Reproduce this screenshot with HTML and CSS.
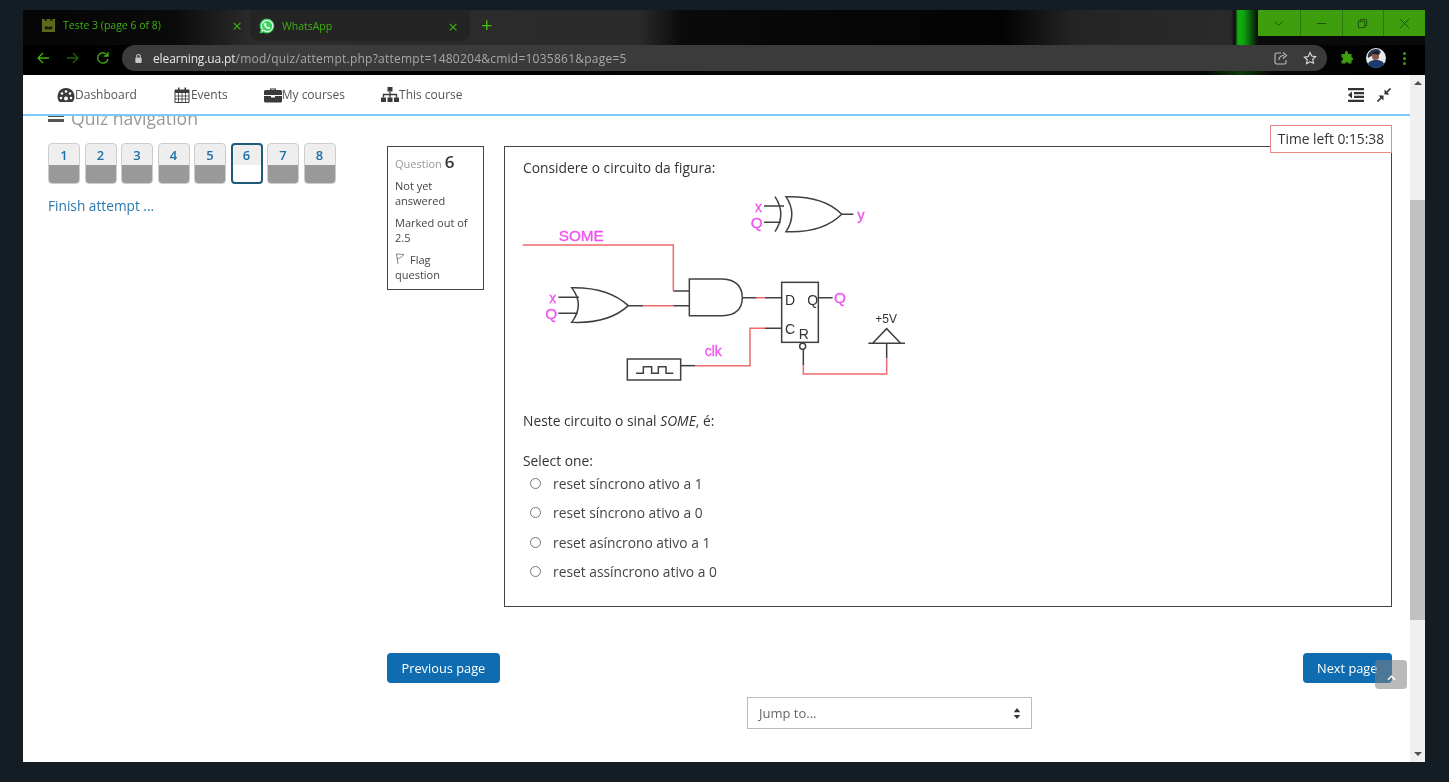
FILE: index.html
```html
<!DOCTYPE html>
<html lang="en">
<head>
    <meta charset="UTF-8">
    <meta name="viewport" content="width=device-width, initial-scale=1.0">
    <link rel="stylesheet" href="styles.css">
    <title>Teste 3 (page 6 of 8)</title>
</head>
<body>
    <div class="window">
        <!-- browser tabs -->
        <div class="tabstrip">
            <div class="tab">
                <svg class="tab-icon" viewBox="0 0 16 16"><path d="M1 1h3v2h2V1h4v2h2V1h3v14H1z" fill="#5b6b1e"/><path d="M4 9h3l1 1 1-1h3v3H4z" fill="#141a08"/></svg>
                <span class="tab-title">Teste 3 (page 6 of 8)</span>
                <span class="tab-close">×</span>
            </div>
            <div class="tab tab-second">
                <svg class="tab-icon wa" viewBox="0 0 16 16"><path d="M8 .5a7.4 7.4 0 0 0-6.3 11.200L.6 15.500l3.900-1A7.400 7.400 0 1 0 8 .5z" fill="#3bd35f"/><path d="M8 2a6 6 0 0 0-5 9.200l-.6 2.300 2.400-.6A6 6 0 1 0 8 2z" fill="#fff"/><path d="M8 3a5 5 0 0 0-4.200 7.700l-.4 1.800 1.900-.5A5 5 0 1 0 8 3z" fill="#3bd35f"/><path d="M6 5c-.6.3-1 1-.8 1.900.4 1.700 2.200 3.600 4.100 3.900.9.100 1.600-.4 1.800-1.100l-1.500-.9-.7.6c-.9-.3-1.700-1.200-2-2l.6-.7L6.700 5z" fill="#fff"/></svg>
                <span class="tab-title">WhatsApp</span>
                <span class="tab-close">×</span>
            </div>
            <span class="new-tab">+</span>
            <div class="win-controls">
                <span class="win-btn"><svg viewBox="0 0 12 12"><path d="M1.500 4 6 8l4.500-4" /></svg></span>
                <span class="win-btn"><svg viewBox="0 0 12 12"><path d="M1 6h10" /></svg></span>
                <span class="win-btn"><svg viewBox="0 0 12 12"><path d="M1.500 3.500h7v7h-7zM3.500 3.500v-2h7v7h-2" /></svg></span>
                <span class="win-btn"><svg viewBox="0 0 12 12"><path d="M1 1l10 10M11 1L1 11" /></svg></span>
            </div>
        </div>

        <!-- address bar -->
        <div class="toolbar">
            <svg class="tool-icon" viewBox="0 0 14 14"><path d="M13 7H2M7 2L2 7l5 5" /></svg>
            <svg class="tool-icon dim" viewBox="0 0 14 14"><path d="M1 7h11M7 2l5 5-5 5" /></svg>
            <svg class="tool-icon" viewBox="0 0 14 14"><path d="M11.500 4.500A5.200 5.200 0 1 0 12 8M12 1v4H8" /></svg>
            <div class="omnibox">
                <svg class="lock" viewBox="0 0 10 12"><path d="M3 5V3.500a2 2 0 0 1 4 0V5" fill="none" stroke="#c8c8c8" stroke-width="1.200"/><rect x="1.500" y="5" width="7" height="6" rx="1" fill="#c8c8c8"/></svg>
                <span class="url"><b>elearning.ua.pt</b>/mod/quiz/attempt.php?attempt=1480204&amp;cmid=1035861&amp;page=5</span>
                <svg class="omni-icon" viewBox="0 0 14 14"><path d="M7 2H2.500A1.500 1.500 0 0 0 1 3.500v8A1.500 1.500 0 0 0 2.500 13h8a1.500 1.500 0 0 0 1.500-1.500V9M5 9c0-3 2-4.500 5-4.500M9 1.500l3.500 3-3.500 3" /></svg>
                <svg class="omni-icon star" viewBox="0 0 14 14"><path d="M7 1.500l1.700 3.600 3.900.5-2.900 2.700.8 3.900L7 10.800l-3.500 1.900.8-3.900-2.900-2.700 3.900-.5z" /></svg>
            </div>
            <svg class="puzzle" viewBox="0 0 14 14"><path d="M5 1.500a1.500 1.500 0 0 1 3 0V3h3.500v3.200a1.600 1.600 0 0 1 0 3.200v3.100H8.500a1.500 1.500 0 0 0-3 0H1.500V9.500a1.600 1.600 0 0 0 0-3.200V3H5z" fill="#3f9e0e"/></svg>
            <svg class="avatar" viewBox="0 0 20 20"><circle cx="10" cy="10" r="10" fill="#e8e8e8"/><path d="M2 16a10 10 0 0 0 16 0c-1-3-4-4-8-4s-7 1-8 4z" fill="#1c3a6e"/><path d="M2 10c-1-5 3-9 8-9 3 0 5 2 5 4-3-1-5 0-6 1z" fill="#2a3550"/><circle cx="9.500" cy="8.500" r="3.500" fill="#8a5a48"/><path d="M6 6c1-3 6-3 8-1l-1 2c-2-1-4-1-7-1z" fill="#1b1b22"/></svg>
            <span class="kebab"><i></i><i></i><i></i></span>
        </div>

        <div class="page">
            <div class="page-main">
                <nav class="topnav">
                    <a class="nav-item">
                        <svg viewBox="0 0 18 16"><path d="M9 1a8.500 8.500 0 0 0-7.500 12.500l1 1.500h13l1-1.500A8.500 8.500 0 0 0 9 1z" fill="#3a3a3a"/><circle cx="5" cy="6.500" r="1.300" fill="#fff"/><circle cx="9" cy="4.500" r="1.300" fill="#fff"/><circle cx="13" cy="6.500" r="1.300" fill="#fff"/><circle cx="4" cy="11" r="1.300" fill="#fff"/><circle cx="14" cy="11" r="1.300" fill="#fff"/><circle cx="9" cy="11.500" r="2" fill="#fff"/></svg>Dashboard</a>
                    <a class="nav-item">
                        <svg viewBox="0 0 16 16"><path d="M1 3h14v12.500H1z" fill="#fff" stroke="#3a3a3a"/><path d="M1 3h14v3H1z" fill="#3a3a3a"/><path d="M4 .5h1.500v4H4zM10.500.5H12v4h-1.500z" fill="#3a3a3a"/><path d="M1 9h14M1 12h14M4.500 6v9.500M8 6v9.500M11.500 6v9.500" stroke="#3a3a3a" stroke-width=".8"/></svg>Events</a>
                    <a class="nav-item">
                        <svg viewBox="0 0 18 16"><path d="M6 3V1.500h6V3h4.500A1.500 1.500 0 0 1 18 4.500V8H0V4.500A1.500 1.500 0 0 1 1.500 3zm1.300 0h3.400v-.6H7.300z" fill="#3a3a3a"/><path d="M0 9h7v1.500h4V9h7v5a1.500 1.500 0 0 1-1.500 1.500h-15A1.500 1.500 0 0 1 0 14z" fill="#3a3a3a"/></svg>My courses</a>
                    <a class="nav-item">
                        <svg viewBox="0 0 18 16"><path d="M6.500 0h5v4.500h-5zM0 10.500h5V15H0zM6.500 10.500h5V15h-5zM13 10.500h5V15h-5z" fill="#3a3a3a"/><path d="M9 4.500v6M2.500 10.500V7.500h13v3" fill="none" stroke="#3a3a3a" stroke-width="1.300"/></svg>This course</a>
                    <div class="nav-tools">
                        <svg viewBox="0 0 16 14"><path d="M0 0h16v2.200H0zM6 4h10v2.200H6zM6 7.800h10V10H6zM0 11.800h16V14H0zM4 3.500v7L0 7z" fill="#333"/></svg>
                        <svg viewBox="0 0 14 14"><path d="M13.500.5l-5 5M.5 13.500l5-5" fill="none" stroke="#333" stroke-width="1.700"/><path d="M7.500 1.500v5h5zM6.500 12.500v-5h-5z" fill="#333"/></svg>
                    </div>
                </nav>

                <div class="content">
                    <aside class="quiz-nav">
                        <h3 class="quiz-nav-title"><span class="burger"></span>Quiz navigation</h3>
                        <div class="qn-buttons">
                            <span class="qn">1</span>
                            <span class="qn">2</span>
                            <span class="qn">3</span>
                            <span class="qn">4</span>
                            <span class="qn">5</span>
                            <span class="qn qn-current">6</span>
                            <span class="qn">7</span>
                            <span class="qn">8</span>
                        </div>
                        <a class="finish">Finish attempt ...</a>
                    </aside>

                    <main class="attempt">
                        <div class="question">
                            <div class="q-info">
                                <h3 class="q-no">Question <b>6</b></h3>
                                <p>Not yet answered</p>
                                <p>Marked out of 2.5</p>
                                <p><svg class="flag" viewBox="0 0 10 12"><path d="M1.500 1l1.500 10M1.500 1C4 1 7 1.500 9 1.500 7.500 3 6 4.500 2.300 6" fill="none" stroke="#777" stroke-width=".9"/></svg>Flag question</p>
                            </div>
                            <div class="q-box">
                                <p class="q-text">Considere o circuito da figura:</p>
                                <svg class="circuit" viewBox="0 0 1230 615">
                                    <g class="wire">
                                        <path d="M762 63h60M762 112h50M995 88h35" />
                                        <path d="M795 35q35 53 0 105" />
                                        <path d="M828 35q35 53 0 105q110 5 167-52q-50-55-167-53z" />
                                        <path d="M145 337h62M145 385h58" />
                                        <path d="M185 308q40 52 0 104q110 5 170-50q-60-56-170-54z" />
                                        <path d="M355 362h45M490 362h48M490 318h48" />
                                        <path d="M538 282h100q58 3 59 56q-1 52-59 54h-100z" />
                                        <path d="M697 338h43M765 338h50" />
                                        <rect x="815" y="292" width="110" height="180" />
                                        <path d="M925 338h43M765 430h50" />
                                        <rect x="352" y="522" width="160" height="63" />
                                        <path d="M378 565h22v-20h25v20h20v-20h23v20h22" />
                                        <path d="M512 542h43" />
                                        <circle cx="878" cy="484" r="9" />
                                        <path d="M880 493v47M1130 520v-45" />
                                        <path d="M1075 475h110M1088 475l42-44 42 44" />
                                    </g>
                                    <g class="wire-red">
                                        <path d="M38 180h452v138" />
                                        <path d="M400 362h90M740 338h25" />
                                        <path d="M765 430h-45v112H555" />
                                        <path d="M880 540v27h250v-47" />
                                    </g>
                                    <g class="pin">
                                        <text x="735" y="80" font-size="42">x</text>
                                        <text x="722" y="128" font-size="46">Q</text>
                                        <text x="1042" y="105" font-size="44">y</text>
                                        <text x="146" y="168" font-size="46">SOME</text>
                                        <text x="118" y="354" font-size="42">x</text>
                                        <text x="106" y="402" font-size="46">Q</text>
                                        <text x="972" y="354" font-size="46">Q</text>
                                        <text x="584" y="514" font-size="42">clk</text>
                                    </g>
                                    <g class="port">
                                        <text x="825" y="360" font-size="42">D</text>
                                        <text x="892" y="360" font-size="42">Q</text>
                                        <text x="825" y="446" font-size="42">C</text>
                                        <text x="866" y="462" font-size="42">R</text>
                                        <text x="1096" y="414" font-size="36">+5V</text>
                                    </g>
                                </svg>
                                <p class="q-text q-after">Neste circuito o sinal <em>SOME</em>, é:</p>
                                <p class="q-text q-prompt">Select one:</p>
                                <ul class="answers">
                                    <li><span class="radio"></span>reset síncrono ativo a 1</li>
                                    <li><span class="radio"></span>reset síncrono ativo a 0</li>
                                    <li><span class="radio"></span>reset asíncrono ativo a 1</li>
                                    <li><span class="radio"></span>reset assíncrono ativo a 0</li>
                                </ul>
                            </div>
                        </div>
                        <div class="page-buttons">
                            <a class="btn">Previous page</a>
                            <a class="btn">Next page</a>
                        </div>
                        <div class="jump">
                            <div class="jump-select">Jump to...<svg viewBox="0 0 8 12"><path d="M4 0l3.500 4.500h-7zM4 12L.5 7.500h7z" fill="#333"/></svg></div>
                        </div>
                    </main>
                </div>

                <div class="timer">Time left 0:15:38</div>
                <a class="to-top"><svg viewBox="0 0 10 6"><path d="M1 5l4-4 4 4" /></svg></a>
            </div>
            <div class="scrollbar">
                <span class="arrow-up"></span>
                <span class="thumb"></span>
                <span class="arrow-down"></span>
            </div>
        </div>
    </div>
</body>
</html>
```

FILE: styles.css
```css
html, body {
    height: 100%;
}

body {
    margin: 0;
    background: #141c24;
    font-family: "Open Sans", sans-serif;
    overflow: hidden;
}

/* the reference photo is a bit soft */
.window {
    width: 1402px;
    margin: 10px 0 0 23px;
    display: flex;
    flex-direction: column;
    filter: blur(.35px);
}

/* Tabs */
.tabstrip {
    height: 35px;
    display: flex;
    align-items: flex-start;
    background:
        linear-gradient(90deg, transparent 1208px, #0c0c0c 1212px, #12b012 1215px, #0fa00f 1221px, #0a0a0a 1235px),
        linear-gradient(90deg, #050505 0, #0a0a0a 150px, #2c2c2c 230px, #2b2b2b 615px, #0a0a0a 660px, #030303 980px, #242424 1050px, #2a2a2a 1200px);
    color: #3fb010;
    font-size: 10.500px;
}

.tab {
    width: 227px;
    height: 30px;
    box-sizing: border-box;
    padding: 0 8px 0 18px;
    display: flex;
    align-items: center;
    gap: 7px;
}

.tab-second {
    width: 220px;
    height: 31px;
    padding: 1px 12px 0 9px;
    background: #242424;
    border-radius: 0 0 8px 8px;
}

.tab-icon {
    width: 15px;
    height: 15px;
    flex: none;
}

.tab-second .tab-icon {
    width: 16px;
    height: 16px;
}

.tab-title {
    flex: 1;
    white-space: nowrap;
}

.tab-close {
    font-size: 17px;
    line-height: 1;
    color: #3fb010;
}

.new-tab {
    height: 30px;
    margin-left: 11px;
    font-size: 20px;
    line-height: 30px;
    color: #46c012;
}

.win-controls {
    margin-left: auto;
    display: flex;
    height: 26px;
    background: #3f9e0e;
}

.win-btn {
    width: 41.750px;
    box-sizing: border-box;
    display: flex;
    align-items: center;
    justify-content: center;
    border-left: 1px solid #2c7a08;
}

.win-btn:first-child {
    border-left: none;
}

.win-btn svg {
    width: 11px;
    height: 11px;
    fill: none;
    stroke: #1d4d08;
    stroke-width: 1;
}

/* Address bar */
.toolbar {
    height: 30px;
    box-sizing: border-box;
    display: flex;
    align-items: center;
    padding: 0 0 4px 13px;
    background: linear-gradient(90deg, #000 0, #050505 1180px, #0c3a0c 1218px, #050505 1250px, #000);
}

.tool-icon {
    width: 14px;
    height: 14px;
    margin-right: 16px;
    flex: none;
    fill: none;
    stroke: #3fb010;
    stroke-width: 1.300;
}

.tool-icon.dim {
    stroke: #24600c;
}

.omnibox {
    width: 1205px;
    height: 26px;
    margin-left: -4px;
    flex: none;
    box-sizing: border-box;
    padding: 0 10px 0 12px;
    display: flex;
    align-items: center;
    background: #3b3b3b;
    border-radius: 13px;
}

.lock {
    width: 9px;
    height: 11px;
    flex: none;
    margin-right: 10px;
}

.url {
    flex: 1;
    font-size: 12px;
    color: #a8a8a8;
    white-space: nowrap;
    letter-spacing: .24px;
}

.url b {
    font-weight: 400;
    color: #e8e8e8;
    letter-spacing: -.12px;
}

.omni-icon {
    width: 14px;
    height: 14px;
    margin-left: 15px;
    fill: none;
    stroke: #bdbdbd;
    stroke-width: 1.100;
}

.omni-icon.star {
    stroke: #e0e0e0;
}

.puzzle {
    width: 14px;
    height: 14px;
    margin-left: 13px;
    flex: none;
}

.avatar {
    width: 20px;
    height: 20px;
    margin-left: 12px;
    flex: none;
}

.kebab {
    display: flex;
    flex-direction: column;
    gap: 2px;
    margin-left: 17px;
}

.kebab i {
    width: 3px;
    height: 3px;
    border-radius: 50%;
    background: #3f9e0e;
}

/* Page */
.page {
    height: 687px;
    display: flex;
    background: #fff;
}

.page-main {
    position: relative;
    flex: 1;
    display: flex;
    flex-direction: column;
    min-width: 0;
}

.topnav {
    height: 41px;
    flex: none;
    box-sizing: border-box;
    display: flex;
    align-items: center;
    padding: 0 18px 0 34px;
    background: #fff;
    border-bottom: 2px solid #7cc9fb;
    position: relative;
    z-index: 2;
    gap: 36px;
}

.nav-item {
    display: flex;
    align-items: center;
    font-size: 12px;
    color: #555;
}

.nav-item svg {
    width: 18px;
    height: 16px;
}

.nav-tools {
    margin-left: auto;
    display: flex;
    align-items: center;
    gap: 12px;
}

.nav-tools svg {
    width: 16px;
    height: 14px;
}

.content {
    flex: 1;
    min-height: 0;
    display: flex;
    padding-left: 25px;
}

.quiz-nav {
    width: 339px;
    flex: none;
}

.quiz-nav-title {
    margin: -11px 0 0;
    height: 26px;
    line-height: 26px;
    font-size: 17.600px;
    font-weight: 400;
    color: #999;
    display: flex;
    align-items: center;
}

.burger {
    width: 16px;
    height: 2px;
    margin-right: 7px;
    border-top: 3px solid #555;
    border-bottom: 3px solid #555;
}

.qn-buttons {
    display: flex;
    gap: 4.500px;
    margin-top: 12px;
}

.qn {
    width: 32px;
    height: 41px;
    box-sizing: border-box;
    padding-top: 1px;
    border: 1px solid #ccc;
    border-radius: 4px;
    background: linear-gradient(#eee 0, #eee 21px, #999 21px);
    color: #1d6fa8;
    font-size: 13px;
    font-weight: 600;
    line-height: 20px;
    text-align: center;
}

.qn-current {
    border: 2px solid #1f5a78;
    line-height: 18px;
    background: linear-gradient(#eee 0, #eee 20px, #fff 20px);
}

.finish {
    display: block;
    margin-top: 12px;
    font-size: 13.700px;
    color: #2a78ae;
}

.attempt {
    width: 1005px;
    flex: none;
}

.question {
    display: flex;
    gap: 20px;
    margin-top: 30px;
}

.q-info {
    width: 97px;
    height: 144px;
    flex: none;
    box-sizing: border-box;
    padding: 4px 7px 0;
    border: 1px solid #444;
    font-size: 11px;
    line-height: 15px;
    color: #444;
}

.q-info p {
    margin: 0 0 7px;
}

.q-no {
    margin: 0 0 4px;
    font-size: 11px;
    font-weight: 400;
    color: #999;
    line-height: 21px;
}

.q-no b {
    font-size: 17px;
    font-weight: 600;
    color: #333;
}

.flag {
    width: 10px;
    height: 12px;
    margin-right: 5px;
    vertical-align: -1px;
}

.q-box {
    flex: 1;
    height: 461px;
    box-sizing: border-box;
    padding: 11px 18px 0;
    border: 1px solid #444;
    font-size: 13.800px;
    color: #333;
}

.q-text {
    margin: 0;
    line-height: 20px;
}

.circuit {
    display: block;
    width: 410px;
    height: 205px;
    margin: 7px 0 0 -13px;
}

.wire {
    fill: none;
    stroke: #404040;
    stroke-width: 4.500;
}

.wire-red {
    fill: none;
    stroke: #ee6a6a;
    stroke-width: 4.500;
}

.pin text {
    font-family: "Liberation Sans", sans-serif;
    fill: #ee55ee;
    stroke: #ee55ee;
    stroke-width: 1;
}

.port text {
    font-family: "Liberation Sans", sans-serif;
    fill: #333;
}

.q-after {
    margin-top: 21px;
}

.q-prompt {
    margin-top: 20px;
}

.answers {
    list-style: none;
    margin: -2px 0 0;
    padding: 0 0 0 7px;
}

.answers li {
    height: 29.300px;
    display: flex;
    align-items: center;
    color: #444;
}

.radio {
    width: 11px;
    height: 11px;
    box-sizing: border-box;
    margin-right: 12px;
    border: 1px solid #777;
    border-radius: 50%;
}

.page-buttons {
    display: flex;
    justify-content: space-between;
    margin-top: 46px;
}

.btn {
    height: 30px;
    box-sizing: border-box;
    padding: 0 14.500px;
    line-height: 30px;
    border-radius: 4px;
    background: #0f6cb0;
    color: #fff;
    font-size: 12.800px;
}

.jump {
    display: flex;
    justify-content: center;
    margin-top: 14px;
}

.jump-select {
    width: 285px;
    height: 32px;
    box-sizing: border-box;
    padding: 0 10px 0 11px;
    display: flex;
    align-items: center;
    justify-content: space-between;
    border: 1px solid #bbb;
    font-size: 13px;
    color: #666;
}

.jump-select svg {
    width: 8px;
    height: 11px;
}

.timer {
    position: absolute;
    top: 50px;
    right: 18px;
    width: 122px;
    height: 28px;
    box-sizing: border-box;
    border: 1px solid #e88a84;
    background: #fff;
    font-size: 13.800px;
    line-height: 26px;
    text-align: center;
    color: #333;
    z-index: 1;
}

.to-top {
    position: absolute;
    top: 585px;
    right: 3px;
    width: 32px;
    height: 29px;
    display: flex;
    align-items: center;
    justify-content: center;
    padding-top: 6px;
    box-sizing: border-box;
    border-radius: 4px;
    background: rgba(130, 130, 130, .55);
}

.to-top svg {
    width: 9px;
    height: 6px;
    fill: none;
    stroke: #fff;
    stroke-width: 1.500;
}

.scrollbar {
    width: 15px;
    flex: none;
    display: flex;
    flex-direction: column;
    align-items: center;
    background: #f0f0f0;
    position: relative;
}

.thumb {
    width: 100%;
    height: 420px;
    margin-top: 125px;
    background: #c1c1c1;
}

.arrow-up,
.arrow-down {
    position: absolute;
    border-left: 4px solid transparent;
    border-right: 4px solid transparent;
}

.arrow-up {
    top: 6px;
    border-bottom: 4px solid #505050;
}

.arrow-down {
    bottom: 6px;
    border-top: 4px solid #505050;
}
```
